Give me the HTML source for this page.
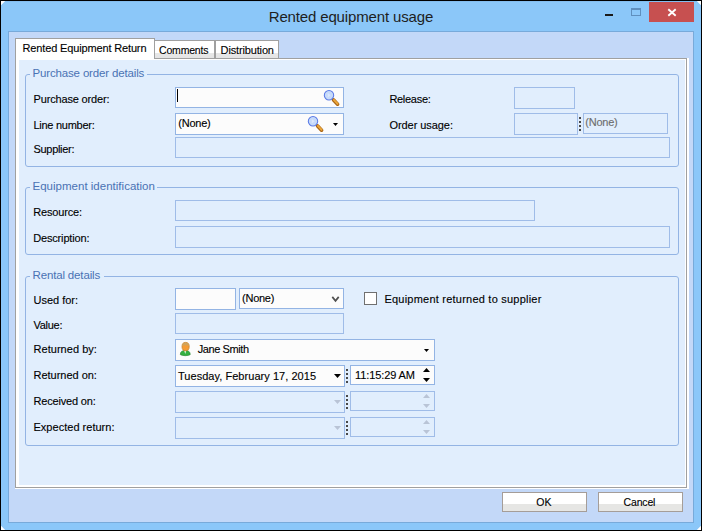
<!DOCTYPE html>
<html><head><meta charset="utf-8"><title>Rented equipment usage</title>
<style>
html,body{margin:0;padding:0;background:#000;}
body{width:702px;height:531px;position:relative;overflow:hidden;font-family:"Liberation Sans",sans-serif;}
.t{position:absolute;white-space:nowrap;line-height:16px;-webkit-text-stroke:0.12px currentColor;}
.ns{-webkit-text-stroke:0;}
</style></head><body>
<div style="position:absolute;left:0px;top:0px;width:702px;height:531px;box-sizing:border-box;background:#000;"></div>
<div style="position:absolute;left:1px;top:1px;width:700px;height:529px;box-sizing:border-box;background:#8bc7f9;"></div>
<div style="position:absolute;left:1px;top:1px;width:700px;height:1px;box-sizing:border-box;background:#84bdef;"></div>
<svg style="position:absolute;left:1px;top:1px" width="700" height="529" viewBox="0 0 700 529"><path d="M0,0 H4.2 L0,4.2 Z M700,0 H695.8 L700,4.2 Z M0,529 H4.2 L0,524.8 Z M700,529 H695.8 L700,524.8 Z" fill="#fff"/></svg>
<div style="position:absolute;left:8px;top:31px;width:686px;height:492px;box-sizing:border-box;background:#c3d8f8;border:1px solid #78aada;"></div>
<div style="position:absolute;left:649px;top:2px;width:45px;height:20px;box-sizing:border-box;background:#c75050;"></div>
<svg style="position:absolute;left:667px;top:8px" width="10" height="9" viewBox="0 0 10 9"><path d="M1.3,1.2 L8.7,7.8 M8.7,1.2 L1.3,7.8" stroke="#fff" stroke-width="1.9"/></svg>
<div style="position:absolute;left:605px;top:14px;width:8px;height:2px;box-sizing:border-box;background:#1a1a1a;"></div>
<div style="position:absolute;left:631px;top:8px;width:10px;height:8px;box-sizing:border-box;border:1px solid #5f8fbe;border-top:2px solid #5f8fbe;"></div>
<div style="position:absolute;left:15px;top:58px;width:674px;height:431px;box-sizing:border-box;background:#fff;"></div>
<div style="position:absolute;left:15px;top:58px;width:672px;height:430px;box-sizing:border-box;border:1px solid #a0a0a0;background:#fff;"></div>
<div style="position:absolute;left:19px;top:60px;width:666px;height:425px;box-sizing:border-box;background:#e1eefd;"></div>
<div style="position:absolute;left:155px;top:40px;width:60px;height:19px;box-sizing:border-box;border:1px solid #a0a0a0;border-left:none;background:linear-gradient(#fff 0,#fff 12px,#e7e7e7 12px,#e4e4e4 100%);"></div>
<div style="position:absolute;left:215px;top:40px;width:64px;height:19px;box-sizing:border-box;border:1px solid #a0a0a0;background:linear-gradient(#fff 0,#fff 12px,#e7e7e7 12px,#e4e4e4 100%);"></div>
<div style="position:absolute;left:15px;top:38px;width:140px;height:22px;box-sizing:border-box;border:1px solid #a0a0a0;border-bottom:none;background:#fff;"></div>
<div style="position:absolute;left:154px;top:59px;width:1px;height:1px;box-sizing:border-box;background:#fff;"></div>
<div style="position:absolute;left:25px;top:74px;width:654px;height:93px;box-sizing:border-box;border:1px solid #93b4e4;border-radius:3px;"></div>
<div style="position:absolute;left:30px;top:72px;width:117px;height:5px;box-sizing:border-box;background:#e1eefd;"></div>
<div style="position:absolute;left:25px;top:187px;width:654px;height:68px;box-sizing:border-box;border:1px solid #93b4e4;border-radius:3px;"></div>
<div style="position:absolute;left:30px;top:185px;width:127px;height:5px;box-sizing:border-box;background:#e1eefd;"></div>
<div style="position:absolute;left:25px;top:276px;width:654px;height:170px;box-sizing:border-box;border:1px solid #93b4e4;border-radius:3px;"></div>
<div style="position:absolute;left:30px;top:274px;width:74px;height:5px;box-sizing:border-box;background:#e1eefd;"></div>
<div style="position:absolute;left:175px;top:87px;width:169px;height:21px;box-sizing:border-box;border:1px solid #93b4e4;background:#fcfcfc;"></div>
<div style="position:absolute;left:177px;top:89px;width:1px;height:13px;box-sizing:border-box;background:#000;"></div>
<svg style="position:absolute;left:322px;top:88px" width="20" height="20" viewBox="-7 -7 20 20"><g transform="translate(0.00,0.25)">
<line x1="3.0" y1="3.2" x2="5" y2="5.3" stroke="#7a5a3a" stroke-width="1.6"/>
<line x1="4.6" y1="4.7" x2="8.6" y2="8.9" stroke="#a86414" stroke-width="3.6" stroke-linecap="round"/>
<line x1="4.9" y1="4.6" x2="8.6" y2="8.5" stroke="#eba63a" stroke-width="1.9" stroke-linecap="round"/>
<circle cx="0" cy="0" r="4.7" fill="#c6dafa" stroke="#5b7ae6" stroke-width="1.05"/>
<path d="M-1.2,-2.2 L1.6,0 L-1.2,2.2 Z" fill="#dce8fd"/>
</g></svg>
<div style="position:absolute;left:175px;top:113px;width:169px;height:22px;box-sizing:border-box;border:1px solid #93b4e4;background:#fcfcfc;"></div>
<svg style="position:absolute;left:306px;top:114px" width="20" height="20" viewBox="-7 -7 20 20"><g transform="translate(0.00,0.25)">
<line x1="3.0" y1="3.2" x2="5" y2="5.3" stroke="#7a5a3a" stroke-width="1.6"/>
<line x1="4.6" y1="4.7" x2="8.6" y2="8.9" stroke="#a86414" stroke-width="3.6" stroke-linecap="round"/>
<line x1="4.9" y1="4.6" x2="8.6" y2="8.5" stroke="#eba63a" stroke-width="1.9" stroke-linecap="round"/>
<circle cx="0" cy="0" r="4.7" fill="#c6dafa" stroke="#5b7ae6" stroke-width="1.05"/>
<path d="M-1.2,-2.2 L1.6,0 L-1.2,2.2 Z" fill="#dce8fd"/>
</g></svg>
<svg style="position:absolute;left:333.0px;top:123px" width="5" height="3" viewBox="0 0 5 3"><polygon points="0,0 5,0 2.5,3" fill="#000"/></svg>
<div style="position:absolute;left:175px;top:137px;width:495px;height:21px;box-sizing:border-box;border:1px solid #9fbce8;background:#e1eefd;"></div>
<div style="position:absolute;left:514px;top:87px;width:61px;height:22px;box-sizing:border-box;border:1px solid #9fbce8;background:#e1eefd;"></div>
<div style="position:absolute;left:514px;top:113px;width:64px;height:22px;box-sizing:border-box;border:1px solid #9fbce8;background:#e1eefd;"></div>
<div style="position:absolute;left:579px;top:117px;width:2px;height:2px;box-sizing:border-box;background:#484848;"></div><div style="position:absolute;left:579px;top:121px;width:2px;height:2px;box-sizing:border-box;background:#484848;"></div><div style="position:absolute;left:579px;top:125px;width:2px;height:2px;box-sizing:border-box;background:#484848;"></div><div style="position:absolute;left:579px;top:129px;width:2px;height:2px;box-sizing:border-box;background:#484848;"></div>
<div style="position:absolute;left:583px;top:113px;width:85px;height:21px;box-sizing:border-box;border:1px solid #9fbce8;background:#e1eefd;"></div>
<div style="position:absolute;left:175px;top:200px;width:360px;height:21px;box-sizing:border-box;border:1px solid #9fbce8;background:#e1eefd;"></div>
<div style="position:absolute;left:175px;top:226px;width:495px;height:22px;box-sizing:border-box;border:1px solid #9fbce8;background:#e1eefd;"></div>
<div style="position:absolute;left:175px;top:288px;width:61px;height:22px;box-sizing:border-box;border:1px solid #93b4e4;background:#fcfcfc;"></div>
<div style="position:absolute;left:239px;top:288px;width:105px;height:21px;box-sizing:border-box;border:1px solid #93b4e4;background:#fcfcfc;"></div>
<svg style="position:absolute;left:331px;top:295px" width="9" height="8" viewBox="0 0 9 8"><path d="M1.3,1.9 L4.5,5.8 L7.7,1.9" stroke="#505050" stroke-width="1.7" fill="none"/></svg>
<div style="position:absolute;left:364px;top:292px;width:13px;height:13px;box-sizing:border-box;border:1px solid #707070;background:#fff;"></div>
<div style="position:absolute;left:175px;top:313px;width:169px;height:21px;box-sizing:border-box;border:1px solid #9fbce8;background:#e1eefd;"></div>
<div style="position:absolute;left:175px;top:339px;width:260px;height:22px;box-sizing:border-box;border:1px solid #93b4e4;background:#fcfcfc;"></div>
<svg style="position:absolute;left:179px;top:341px" width="13" height="16" viewBox="0 0 13 16">
<path d="M1.3,13.6 C1.3,10.8 3.2,9.4 6.3,9.4 C9.4,9.4 11.2,10.8 11.2,13.6 C9.8,15.0 2.8,15.0 1.3,13.6 Z" fill="#34b040" stroke="#2a8a34" stroke-width="0.7"/>
<path d="M5.2,9.6 L6.2,13 L7.3,9.6 Z" fill="#f4faf4"/>
<ellipse cx="6.6" cy="5.6" rx="3.6" ry="4.2" fill="#f59c34" stroke="#c8842c" stroke-width="0.8"/>
<path d="M3.0,5.2 C2.8,0.6 10.4,0.6 10.2,5.2 C8.6,3.9 4.6,3.9 3.0,5.2 Z" fill="#cfa45c"/>
</svg>
<svg style="position:absolute;left:424.0px;top:349px" width="5" height="3" viewBox="0 0 5 3"><polygon points="0,0 5,0 2.5,3" fill="#000"/></svg>
<div style="position:absolute;left:175px;top:365px;width:170px;height:22px;box-sizing:border-box;border:1px solid #93b4e4;background:#fcfcfc;"></div>
<div style="position:absolute;left:350px;top:365px;width:85px;height:20px;box-sizing:border-box;border:1px solid #93b4e4;background:#fcfcfc;"></div>
<div style="position:absolute;left:346px;top:369px;width:2px;height:2px;box-sizing:border-box;background:#484848;"></div><div style="position:absolute;left:346px;top:373px;width:2px;height:2px;box-sizing:border-box;background:#484848;"></div><div style="position:absolute;left:346px;top:377px;width:2px;height:2px;box-sizing:border-box;background:#484848;"></div><div style="position:absolute;left:346px;top:381px;width:2px;height:2px;box-sizing:border-box;background:#484848;"></div>
<svg style="position:absolute;left:334.0px;top:374px" width="7" height="4" viewBox="0 0 7 4"><polygon points="0,0 7,0 3.5,4" fill="#000"/></svg>
<svg style="position:absolute;left:423.0px;top:368px" width="7" height="4" viewBox="0 0 7 4"><polygon points="0,4 7,4 3.5,0" fill="#000"/></svg>
<svg style="position:absolute;left:423.0px;top:378px" width="7" height="4" viewBox="0 0 7 4"><polygon points="0,0 7,0 3.5,4" fill="#000"/></svg>
<div style="position:absolute;left:175px;top:391px;width:170px;height:22px;box-sizing:border-box;border:1px solid #9fbce8;background:#e1eefd;"></div>
<div style="position:absolute;left:350px;top:391px;width:85px;height:20px;box-sizing:border-box;border:1px solid #9fbce8;background:#e1eefd;"></div>
<div style="position:absolute;left:346px;top:395px;width:2px;height:2px;box-sizing:border-box;background:#484848;"></div><div style="position:absolute;left:346px;top:399px;width:2px;height:2px;box-sizing:border-box;background:#484848;"></div><div style="position:absolute;left:346px;top:403px;width:2px;height:2px;box-sizing:border-box;background:#484848;"></div><div style="position:absolute;left:346px;top:407px;width:2px;height:2px;box-sizing:border-box;background:#484848;"></div>
<svg style="position:absolute;left:334.0px;top:400px" width="7" height="4" viewBox="0 0 7 4"><polygon points="0,0 7,0 3.5,4" fill="#b9c4d6"/></svg>
<svg style="position:absolute;left:423.0px;top:394px" width="7" height="4" viewBox="0 0 7 4"><polygon points="0,4 7,4 3.5,0" fill="#b9c4d6"/></svg>
<svg style="position:absolute;left:423.0px;top:404px" width="7" height="4" viewBox="0 0 7 4"><polygon points="0,0 7,0 3.5,4" fill="#b9c4d6"/></svg>
<div style="position:absolute;left:175px;top:417px;width:170px;height:22px;box-sizing:border-box;border:1px solid #9fbce8;background:#e1eefd;"></div>
<div style="position:absolute;left:350px;top:417px;width:85px;height:20px;box-sizing:border-box;border:1px solid #9fbce8;background:#e1eefd;"></div>
<div style="position:absolute;left:346px;top:421px;width:2px;height:2px;box-sizing:border-box;background:#484848;"></div><div style="position:absolute;left:346px;top:425px;width:2px;height:2px;box-sizing:border-box;background:#484848;"></div><div style="position:absolute;left:346px;top:429px;width:2px;height:2px;box-sizing:border-box;background:#484848;"></div><div style="position:absolute;left:346px;top:433px;width:2px;height:2px;box-sizing:border-box;background:#484848;"></div>
<svg style="position:absolute;left:334.0px;top:426px" width="7" height="4" viewBox="0 0 7 4"><polygon points="0,0 7,0 3.5,4" fill="#b9c4d6"/></svg>
<svg style="position:absolute;left:423.0px;top:420px" width="7" height="4" viewBox="0 0 7 4"><polygon points="0,4 7,4 3.5,0" fill="#b9c4d6"/></svg>
<svg style="position:absolute;left:423.0px;top:430px" width="7" height="4" viewBox="0 0 7 4"><polygon points="0,0 7,0 3.5,4" fill="#b9c4d6"/></svg>
<div style="position:absolute;left:502px;top:492px;width:85px;height:20px;box-sizing:border-box;border:1px solid #a59d98;background:linear-gradient(#fff 0,#fff 11px,#e6e6e4 11px,#e6e6e4 100%);"></div>
<div style="position:absolute;left:598px;top:492px;width:85px;height:20px;box-sizing:border-box;border:1px solid #a59d98;background:linear-gradient(#fff 0,#fff 11px,#e6e6e4 11px,#e6e6e4 100%);"></div>
<span class="t ns" id="t0" style="left:268.7px;top:8.50px;font-size:15px;color:#1e1e1e;letter-spacing:-0.144px">Rented equipment usage</span>
<span class="t " id="t1" style="left:22.5px;top:39.99px;font-size:11px;color:#000;letter-spacing:-0.145px">Rented Equipment Return</span>
<span class="t " id="t2" style="left:159.0px;top:41.96px;font-size:10.5px;color:#000;letter-spacing:-0.181px">Comments</span>
<span class="t " id="t3" style="left:220.6px;top:41.79px;font-size:11px;color:#000;letter-spacing:-0.148px">Distribution</span>
<span class="t ns" id="t4" style="left:32.5px;top:65.02px;font-size:11.5px;color:#4a72b4;letter-spacing:-0.155px">Purchase order details</span>
<span class="t ns" id="t5" style="left:32.5px;top:178.02px;font-size:11.5px;color:#4a72b4;letter-spacing:0.013px">Equipment identification</span>
<span class="t ns" id="t6" style="left:32.5px;top:267.02px;font-size:11.5px;color:#4a72b4;letter-spacing:-0.153px">Rental details</span>
<span class="t " id="t7" style="left:33.5px;top:90.79px;font-size:11px;color:#000;letter-spacing:-0.162px">Purchase order:</span>
<span class="t " id="t8" style="left:33.5px;top:116.79px;font-size:11px;color:#000;letter-spacing:-0.274px">Line number:</span>
<span class="t " id="t9" style="left:33.5px;top:140.69px;font-size:11px;color:#000;letter-spacing:-0.303px">Supplier:</span>
<span class="t " id="t10" style="left:389.4px;top:90.79px;font-size:11px;color:#000;letter-spacing:-0.289px">Release:</span>
<span class="t " id="t11" style="left:389.4px;top:116.79px;font-size:11px;color:#000;letter-spacing:-0.055px">Order usage:</span>
<span class="t " id="t12" style="left:33.2px;top:203.79px;font-size:11px;color:#000;letter-spacing:-0.168px">Resource:</span>
<span class="t " id="t13" style="left:33.2px;top:230.09px;font-size:11px;color:#000;letter-spacing:-0.162px">Description:</span>
<span class="t " id="t14" style="left:33.5px;top:291.69px;font-size:11px;color:#000;letter-spacing:-0.018px">Used for:</span>
<span class="t " id="t15" style="left:33.5px;top:316.79px;font-size:11px;color:#000;letter-spacing:-0.275px">Value:</span>
<span class="t " id="t16" style="left:33.5px;top:341.19px;font-size:11px;color:#000;letter-spacing:0.038px">Returned by:</span>
<span class="t " id="t17" style="left:33.5px;top:367.19px;font-size:11px;color:#000;letter-spacing:-0.019px">Returned on:</span>
<span class="t " id="t18" style="left:33.5px;top:392.89px;font-size:11px;color:#000;letter-spacing:-0.184px">Received on:</span>
<span class="t " id="t19" style="left:33.5px;top:418.89px;font-size:11px;color:#000;letter-spacing:0.019px">Expected return:</span>
<span class="t " id="t20" style="left:178.2px;top:114.69px;font-size:11px;color:#000;letter-spacing:-0.205px">(None)</span>
<span class="t " id="t21" style="left:585.2px;top:113.69px;font-size:11px;color:#6d6d6d;letter-spacing:-0.205px">(None)</span>
<span class="t " id="t22" style="left:242.1px;top:289.69px;font-size:11px;color:#000;letter-spacing:-0.285px">(None)</span>
<span class="t " id="t23" style="left:384.4px;top:290.89px;font-size:11px;color:#000;letter-spacing:0.226px">Equipment returned to supplier</span>
<span class="t " id="t24" style="left:197.7px;top:340.79px;font-size:11px;color:#000;letter-spacing:-0.403px">Jane Smith</span>
<span class="t " id="t25" style="left:178.0px;top:367.99px;font-size:11px;color:#000;letter-spacing:0.041px">Tuesday, February 17, 2015</span>
<span class="t " id="t26" style="left:355.0px;top:367.09px;font-size:11px;color:#000;letter-spacing:-0.105px">11:15:29 AM</span>
<span class="t " id="t27" style="left:536.3px;top:493.86px;font-size:10.5px;color:#000;letter-spacing:0.028px">OK</span>
<span class="t " id="t28" style="left:623.6px;top:493.86px;font-size:10.5px;color:#000;letter-spacing:-0.177px">Cancel</span>
</body></html>
